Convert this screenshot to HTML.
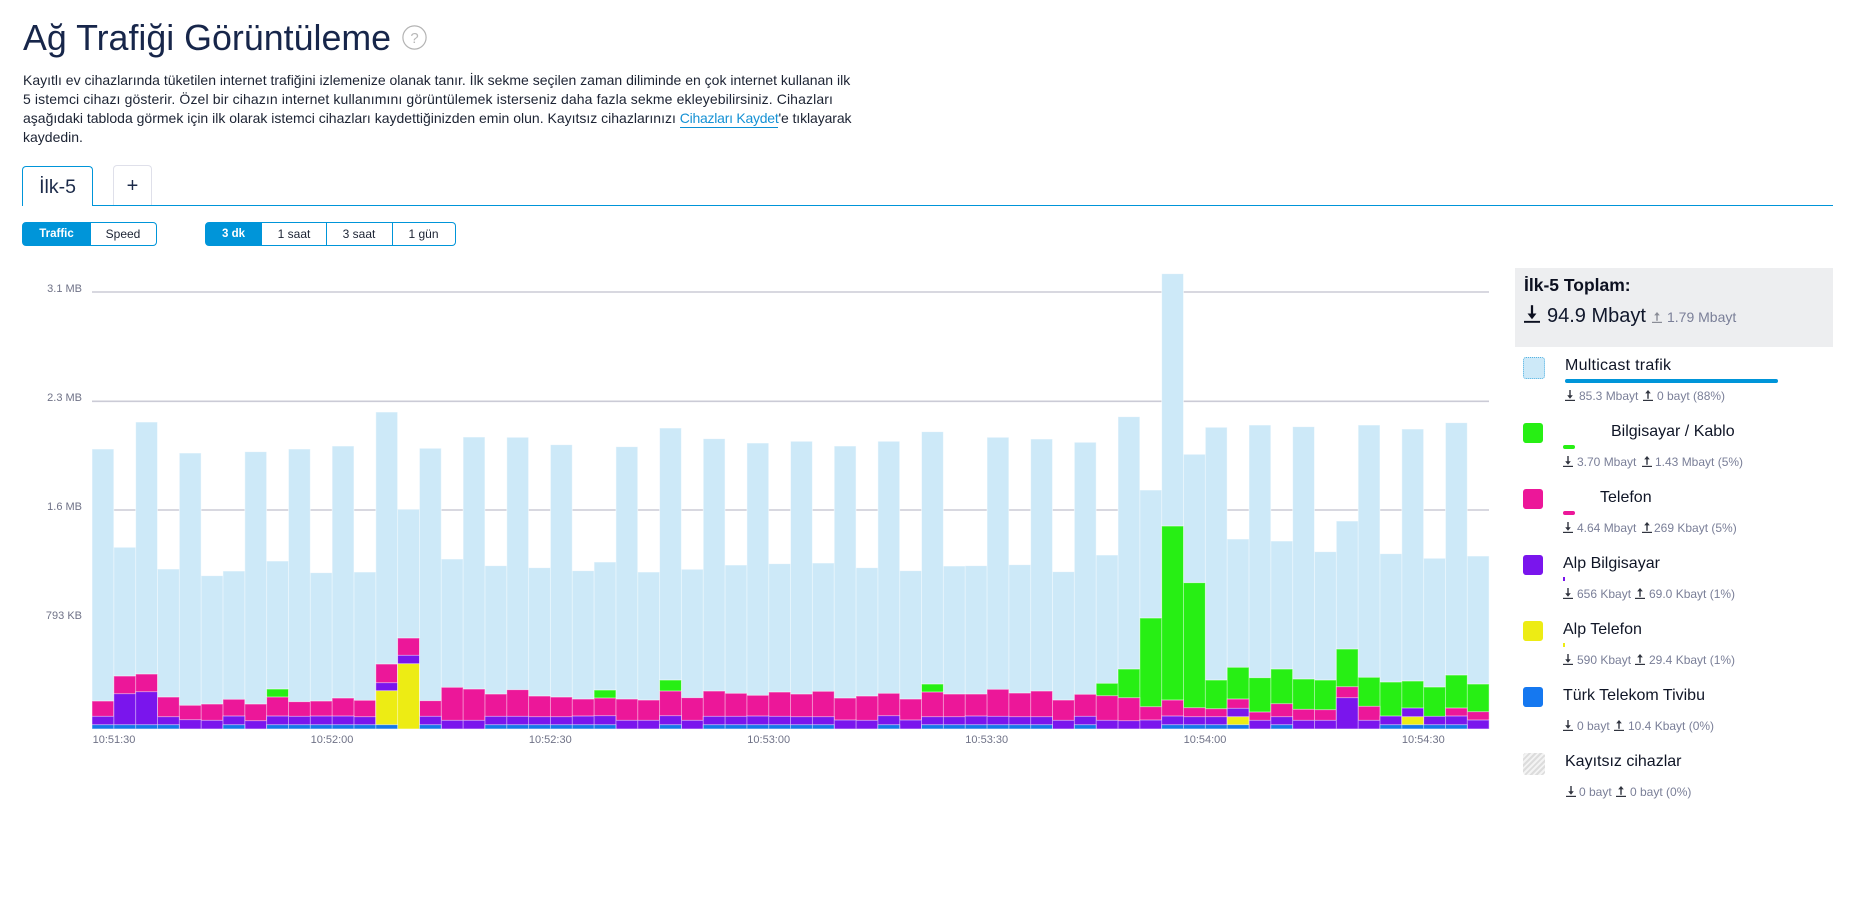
<!DOCTYPE html>
<html lang="tr"><head><meta charset="utf-8"><title>Ağ Trafiği Görüntüleme</title>
<style>
html,body{margin:0;padding:0;background:#fff}
#p{position:relative;width:1852px;height:905px;overflow:hidden;background:#fff;font-family:"Liberation Sans",sans-serif;color:#14213d}
.a{position:absolute;white-space:nowrap}
.l{position:absolute;left:23px;white-space:nowrap;font-size:14px;line-height:18px;color:#1c2333}
.n{position:absolute;font-size:16px;line-height:20px;color:#0f1526;white-space:nowrap}
.s{position:absolute;font-size:12px;line-height:16px;color:#7a7f98;white-space:nowrap}
.i{position:absolute;width:10px;height:11px}
.sw{position:absolute;left:1523px;width:20px;height:20px;border-radius:3px}
.b{position:absolute;top:222px;height:24px;box-sizing:border-box;border:1px solid #0095d9;font-size:12px;line-height:22px;text-align:center;color:#1c2333}
.on{background:#0095d9;color:#fff;font-weight:bold;font-size:11.5px}
</style></head><body><div id="p">
<svg width="0" height="0" style="position:absolute"><defs>
<symbol id="d" viewBox="0 0 10 11"><path d="M5 0V7" stroke="currentColor" stroke-width="1.4" fill="none"/><path d="M2.2 5.2H7.8L5 8.8Z" fill="currentColor"/><rect x="0" y="9.8" width="10" height="1.2" fill="currentColor"/></symbol>
<symbol id="u" viewBox="0 0 10 11"><path d="M5 8.8V2" stroke="currentColor" stroke-width="1.4" fill="none"/><path d="M2.2 3.4H7.8L5 0Z" fill="currentColor"/><rect x="0" y="9.8" width="10" height="1.2" fill="currentColor"/></symbol>
</defs></svg>

<div class="a" style="left:23px;top:16px;font-size:35.8px;line-height:44px;color:#17264a">Ağ Trafiği Görüntüleme</div>
<svg class="a" style="left:402px;top:25px" width="25" height="25" viewBox="0 0 25 25"><circle cx="12.5" cy="12.5" r="11.6" fill="none" stroke="#b4b4b4" stroke-width="1.2"/><text x="12.5" y="18" font-size="15" text-anchor="middle" fill="#b8b8b8" font-family="Liberation Sans, sans-serif">?</text></svg>

<div class="l" style="top:71px">Kayıtlı ev cihazlarında tüketilen internet trafiğini izlemenize olanak tanır. İlk sekme seçilen zaman diliminde en çok internet kullanan ilk</div>
<div class="l" style="top:90px;letter-spacing:.117px">5 istemci cihazı gösterir. Özel bir cihazın internet kullanımını görüntülemek isterseniz daha fazla sekme ekleyebilirsiniz. Cihazları</div>
<div class="l" style="top:109px">aşağıdaki tabloda görmek için ilk olarak istemci cihazları kaydettiğinizden emin olun. Kayıtsız cihazlarınızı <span style="color:#1591d4;border-bottom:1px solid #0a8fd4;padding-bottom:1px;letter-spacing:-.25px">Cihazları Kaydet</span><span style="letter-spacing:-.1px">'e tıklayarak</span></div>
<div class="l" style="top:128px">kaydedin.</div>

<div class="a" style="left:92px;top:205px;width:1741px;height:1px;background:#0095d9"></div>
<div class="a" style="left:22px;top:166px;width:71px;height:40px;box-sizing:border-box;border:1px solid #0095d9;border-bottom:0;border-radius:4px 4px 0 0;background:#fff;text-align:center;font-size:19.5px;line-height:40px;color:#1c2b4a">İlk-5</div>
<div class="a" style="left:113px;top:165px;width:39px;height:40px;box-sizing:border-box;border:1px solid #dfe0ea;border-bottom:0;border-radius:4px 4px 0 0;background:#fff;text-align:center;font-size:20px;line-height:40px;color:#1c2b4a">+</div>

<div class="b on" style="left:22px;width:69px;border-radius:4px 0 0 4px">Traffic</div>
<div class="b" style="left:90px;width:67px;border-left:0;border-radius:0 4px 4px 0">Speed</div>
<div class="b on" style="left:205px;width:57px;border-radius:4px 0 0 4px">3 dk</div>
<div class="b" style="left:261px;width:66px">1 saat</div>
<div class="b" style="left:326px;width:67px;border-left:0">3 saat</div>
<div class="b" style="left:392px;width:64px;border-left:0;border-radius:0 4px 4px 0">1 gün</div>

<svg class="a" style="left:0;top:0" width="1500" height="760" viewBox="0 0 1500 760">
<g stroke="#cbcbd6" stroke-width="1.6"><path d="M92 292H1489M92 401.3H1489M92 510H1489"/></g>
<path stroke="#d4d4e0" stroke-width="1" d="M92 729H1489"/>
<g font-family="Liberation Sans, sans-serif" font-size="11" fill="#6f7287">
<g text-anchor="end"><text x="82" y="292">3.1 MB</text><text x="82" y="401">2.3 MB</text><text x="82" y="510">1.6 MB</text><text x="82" y="619">793 KB</text></g>
<g text-anchor="middle"><text x="114" y="743">10:51:30</text><text x="332" y="743">10:52:00</text><text x="550.3" y="743">10:52:30</text><text x="768.7" y="743">10:53:00</text><text x="986.7" y="743">10:53:30</text><text x="1205" y="743">10:54:00</text><text x="1423.3" y="743">10:54:30</text></g>
</g>
<g stroke="#fff" stroke-opacity=".55" stroke-width=".9">
<path fill="#cde9f8" d="M92 449h21.83V729h-21.83zM113.83 547.3h21.83V729h-21.83zM135.66 422h21.83V729h-21.83zM157.49 569h21.83V729h-21.83zM179.32 453h21.83V729h-21.83zM201.15 575.7h21.83V729h-21.83zM222.98 571h21.83V729h-21.83zM244.81 451.7h21.83V729h-21.83zM266.64 561h21.83V729h-21.83zM288.47 449h21.83V729h-21.83zM310.3 572.7h21.83V729h-21.83zM332.13 446h21.83V729h-21.83zM353.96 572h21.83V729h-21.83zM375.79 412h21.83V729h-21.83zM397.62 509.3h21.83V729h-21.83zM419.45 448.3h21.83V729h-21.83zM441.28 559h21.83V729h-21.83zM463.11 437h21.83V729h-21.83zM484.94 565.7h21.83V729h-21.83zM506.77 437.3h21.83V729h-21.83zM528.6 567.7h21.83V729h-21.83zM550.43 444.7h21.83V729h-21.83zM572.26 570.7h21.83V729h-21.83zM594.09 562h21.83V729h-21.83zM615.92 446.7h21.83V729h-21.83zM637.75 572h21.83V729h-21.83zM659.58 428h21.83V729h-21.83zM681.41 569.3h21.83V729h-21.83zM703.24 438.7h21.83V729h-21.83zM725.07 565h21.83V729h-21.83zM746.9 443h21.83V729h-21.83zM768.73 563.7h21.83V729h-21.83zM790.56 441.3h21.83V729h-21.83zM812.39 563h21.83V729h-21.83zM834.22 446h21.83V729h-21.83zM856.05 567.7h21.83V729h-21.83zM877.88 441.3h21.83V729h-21.83zM899.71 570.7h21.83V729h-21.83zM921.54 431.7h21.83V729h-21.83zM943.37 566h21.83V729h-21.83zM965.2 565.7h21.83V729h-21.83zM987.03 437.3h21.83V729h-21.83zM1008.86 564.7h21.83V729h-21.83zM1030.69 439h21.83V729h-21.83zM1052.52 571.7h21.83V729h-21.83zM1074.35 442.3h21.83V729h-21.83zM1096.18 555h21.83V729h-21.83zM1118.01 416.7h21.83V729h-21.83zM1139.84 490h21.83V729h-21.83zM1161.67 273.7h21.83V729h-21.83zM1183.5 454.3h21.83V729h-21.83zM1205.33 427.3h21.83V729h-21.83zM1227.16 539h21.83V729h-21.83zM1248.99 425h21.83V729h-21.83zM1270.82 541h21.83V729h-21.83zM1292.65 426.7h21.83V729h-21.83zM1314.48 551.7h21.83V729h-21.83zM1336.31 521h21.83V729h-21.83zM1358.14 425h21.83V729h-21.83zM1379.97 553.7h21.83V729h-21.83zM1401.8 429h21.83V729h-21.83zM1423.63 558.3h21.83V729h-21.83zM1445.46 422.7h21.83V729h-21.83zM1467.29 556h21.83V729h-21.83z"/>
<path fill="#27ef14" d="M266.64 689h21.83V729h-21.83zM594.09 690h21.83V729h-21.83zM659.58 680h21.83V729h-21.83zM921.54 684h21.83V729h-21.83zM1096.18 683.3h21.83V729h-21.83zM1118.01 669h21.83V729h-21.83zM1139.84 618h21.83V729h-21.83zM1161.67 526h21.83V729h-21.83zM1183.5 582.7h21.83V729h-21.83zM1205.33 680h21.83V729h-21.83zM1227.16 667.3h21.83V729h-21.83zM1248.99 677.7h21.83V729h-21.83zM1270.82 669h21.83V729h-21.83zM1292.65 679h21.83V729h-21.83zM1314.48 680h21.83V729h-21.83zM1336.31 649h21.83V729h-21.83zM1358.14 677.3h21.83V729h-21.83zM1379.97 682h21.83V729h-21.83zM1401.8 681h21.83V729h-21.83zM1423.63 687h21.83V729h-21.83zM1445.46 675h21.83V729h-21.83zM1467.29 684h21.83V729h-21.83z"/>
<path fill="#ec1799" d="M92 701h21.83V729h-21.83zM113.83 676h21.83V729h-21.83zM135.66 674h21.83V729h-21.83zM157.49 697h21.83V729h-21.83zM179.32 705.3h21.83V729h-21.83zM201.15 704h21.83V729h-21.83zM222.98 699.3h21.83V729h-21.83zM244.81 704h21.83V729h-21.83zM266.64 697h21.83V729h-21.83zM288.47 701.7h21.83V729h-21.83zM310.3 701h21.83V729h-21.83zM332.13 698h21.83V729h-21.83zM353.96 700.3h21.83V729h-21.83zM375.79 664h21.83V729h-21.83zM397.62 638h21.83V729h-21.83zM419.45 700.7h21.83V729h-21.83zM441.28 687.3h21.83V729h-21.83zM463.11 689h21.83V729h-21.83zM484.94 694h21.83V729h-21.83zM506.77 689.7h21.83V729h-21.83zM528.6 696h21.83V729h-21.83zM550.43 697h21.83V729h-21.83zM572.26 699h21.83V729h-21.83zM594.09 698h21.83V729h-21.83zM615.92 699h21.83V729h-21.83zM637.75 700h21.83V729h-21.83zM659.58 691h21.83V729h-21.83zM681.41 697.7h21.83V729h-21.83zM703.24 691h21.83V729h-21.83zM725.07 693.3h21.83V729h-21.83zM746.9 695.3h21.83V729h-21.83zM768.73 692h21.83V729h-21.83zM790.56 694h21.83V729h-21.83zM812.39 691.3h21.83V729h-21.83zM834.22 698h21.83V729h-21.83zM856.05 696h21.83V729h-21.83zM877.88 693.3h21.83V729h-21.83zM899.71 699h21.83V729h-21.83zM921.54 692h21.83V729h-21.83zM943.37 694h21.83V729h-21.83zM965.2 694h21.83V729h-21.83zM987.03 689.3h21.83V729h-21.83zM1008.86 693h21.83V729h-21.83zM1030.69 691h21.83V729h-21.83zM1052.52 700h21.83V729h-21.83zM1074.35 694.3h21.83V729h-21.83zM1096.18 695.7h21.83V729h-21.83zM1118.01 697.7h21.83V729h-21.83zM1139.84 706.7h21.83V729h-21.83zM1161.67 700h21.83V729h-21.83zM1183.5 707.7h21.83V729h-21.83zM1205.33 708.7h21.83V729h-21.83zM1227.16 699h21.83V729h-21.83zM1248.99 712h21.83V729h-21.83zM1270.82 703.7h21.83V729h-21.83zM1292.65 709.3h21.83V729h-21.83zM1314.48 709.7h21.83V729h-21.83zM1336.31 686.7h21.83V729h-21.83zM1358.14 706.3h21.83V729h-21.83zM1445.46 708h21.83V729h-21.83zM1467.29 711.7h21.83V729h-21.83z"/>
<path fill="#7a15ed" d="M92 716.3h21.83V729h-21.83zM113.83 693.7h21.83V729h-21.83zM135.66 691.7h21.83V729h-21.83zM157.49 716.7h21.83V729h-21.83zM179.32 719.7h21.83V729h-21.83zM201.15 720.3h21.83V729h-21.83zM222.98 716h21.83V729h-21.83zM244.81 720.7h21.83V729h-21.83zM266.64 716h21.83V729h-21.83zM288.47 716.3h21.83V729h-21.83zM310.3 716h21.83V729h-21.83zM332.13 716h21.83V729h-21.83zM353.96 716.7h21.83V729h-21.83zM375.79 682.7h21.83V729h-21.83zM397.62 655.3h21.83V729h-21.83zM419.45 716.3h21.83V729h-21.83zM441.28 720.3h21.83V729h-21.83zM463.11 720.3h21.83V729h-21.83zM484.94 716.3h21.83V729h-21.83zM506.77 716.3h21.83V729h-21.83zM528.6 716.7h21.83V729h-21.83zM550.43 716.7h21.83V729h-21.83zM572.26 716h21.83V729h-21.83zM594.09 715.7h21.83V729h-21.83zM615.92 720.3h21.83V729h-21.83zM637.75 720.3h21.83V729h-21.83zM659.58 715.7h21.83V729h-21.83zM681.41 720.3h21.83V729h-21.83zM703.24 716.3h21.83V729h-21.83zM725.07 716.3h21.83V729h-21.83zM746.9 716h21.83V729h-21.83zM768.73 716.3h21.83V729h-21.83zM790.56 716.7h21.83V729h-21.83zM812.39 716.7h21.83V729h-21.83zM834.22 720h21.83V729h-21.83zM856.05 720.3h21.83V729h-21.83zM877.88 715.7h21.83V729h-21.83zM899.71 720h21.83V729h-21.83zM921.54 716.7h21.83V729h-21.83zM943.37 716.7h21.83V729h-21.83zM965.2 716h21.83V729h-21.83zM987.03 716.3h21.83V729h-21.83zM1008.86 716.7h21.83V729h-21.83zM1030.69 716.7h21.83V729h-21.83zM1052.52 720.3h21.83V729h-21.83zM1074.35 716.3h21.83V729h-21.83zM1096.18 720.3h21.83V729h-21.83zM1118.01 720.7h21.83V729h-21.83zM1139.84 720h21.83V729h-21.83zM1161.67 716h21.83V729h-21.83zM1183.5 716.7h21.83V729h-21.83zM1205.33 716.7h21.83V729h-21.83zM1227.16 708.3h21.83V729h-21.83zM1248.99 720.3h21.83V729h-21.83zM1270.82 716.7h21.83V729h-21.83zM1292.65 720.3h21.83V729h-21.83zM1314.48 720.3h21.83V729h-21.83zM1336.31 697.7h21.83V729h-21.83zM1358.14 720.3h21.83V729h-21.83zM1379.97 716h21.83V729h-21.83zM1401.8 708h21.83V729h-21.83zM1423.63 716.3h21.83V729h-21.83zM1445.46 716h21.83V729h-21.83zM1467.29 720h21.83V729h-21.83z"/>
<path fill="#edec14" d="M375.79 690.7h21.83V729h-21.83zM397.62 663.7h21.83V729h-21.83zM1227.16 716.7h21.83V729h-21.83zM1401.8 716.7h21.83V729h-21.83z"/>
<path fill="#1578e8" d="M92 724.7h21.83V729h-21.83zM113.83 724.7h21.83V729h-21.83zM135.66 724.7h21.83V729h-21.83zM157.49 724.7h21.83V729h-21.83zM222.98 724.7h21.83V729h-21.83zM266.64 724.7h21.83V729h-21.83zM288.47 724.7h21.83V729h-21.83zM310.3 724.7h21.83V729h-21.83zM332.13 724.7h21.83V729h-21.83zM353.96 724.7h21.83V729h-21.83zM375.79 724.7h21.83V729h-21.83zM419.45 724.7h21.83V729h-21.83zM484.94 724.7h21.83V729h-21.83zM506.77 724.7h21.83V729h-21.83zM528.6 724.7h21.83V729h-21.83zM550.43 724.7h21.83V729h-21.83zM572.26 724.7h21.83V729h-21.83zM594.09 724.7h21.83V729h-21.83zM659.58 724.7h21.83V729h-21.83zM703.24 724.7h21.83V729h-21.83zM725.07 724.7h21.83V729h-21.83zM746.9 724.7h21.83V729h-21.83zM768.73 724.7h21.83V729h-21.83zM790.56 724.7h21.83V729h-21.83zM812.39 724.7h21.83V729h-21.83zM877.88 724.7h21.83V729h-21.83zM921.54 724.7h21.83V729h-21.83zM943.37 724.7h21.83V729h-21.83zM965.2 724.7h21.83V729h-21.83zM987.03 724.7h21.83V729h-21.83zM1008.86 724.7h21.83V729h-21.83zM1030.69 724.7h21.83V729h-21.83zM1074.35 724.7h21.83V729h-21.83zM1161.67 724.7h21.83V729h-21.83zM1183.5 724.7h21.83V729h-21.83zM1205.33 724.7h21.83V729h-21.83zM1227.16 724.7h21.83V729h-21.83zM1270.82 724.7h21.83V729h-21.83zM1379.97 724.7h21.83V729h-21.83zM1401.8 724.7h21.83V729h-21.83zM1423.63 724.7h21.83V729h-21.83zM1445.46 724.7h21.83V729h-21.83z"/>
</g>
</svg>

<div class="a" style="left:1515px;top:268px;width:318px;height:79px;background:#edeef0"></div>
<div class="a" style="left:1524px;top:274px;font-size:17.5px;line-height:22px;font-weight:bold;color:#0c1020">İlk-5 Toplam:</div>
<svg class="a" style="left:1524px;top:305px;color:#0c1020" width="16" height="18"><use href="#d"/></svg>
<div class="a" style="left:1547px;top:304px;font-size:20px;line-height:24px;color:#10172b">94.9 Mbayt</div>
<svg class="a" style="left:1652px;top:312px;color:#8a8d97" width="10" height="11"><use href="#u"/></svg>
<div class="a" style="left:1667px;top:308px;font-size:14px;line-height:18px;color:#7a7f98">1.79 Mbayt</div>

<div class="sw" style="top:357px;width:20px;height:20px;background:#cde9f8;border:1px dotted #55b3e2"></div>
<div class="n" style="left:1565px;top:356px;letter-spacing:.25px">Multicast trafik</div>
<div class="a" style="left:1565px;top:379px;width:213px;height:4px;border-radius:2px;background:#0095d9"></div>
<svg class="i" style="left:1565px;top:390px;color:#30343f"><use href="#d"/></svg>
<div class="s" style="left:1579px;top:388px">85.3 Mbayt</div>
<svg class="i" style="left:1643px;top:390px;color:#30343f"><use href="#u"/></svg>
<div class="s" style="left:1657px;top:388px">0 bayt (88%)</div>

<div class="sw" style="top:423px;background:#27ef14"></div>
<div class="n" style="left:1611px;top:422px">Bilgisayar / Kablo</div>
<div class="a" style="left:1563px;top:445px;width:12px;height:4px;border-radius:2px;background:#27ef14"></div>
<svg class="i" style="left:1563px;top:456px;color:#30343f"><use href="#d"/></svg>
<div class="s" style="left:1577px;top:454px">3.70 Mbayt</div>
<svg class="i" style="left:1642px;top:456px;color:#30343f"><use href="#u"/></svg>
<div class="s" style="left:1655px;top:454px">1.43 Mbayt (5%)</div>

<div class="sw" style="top:489px;background:#ec1799"></div>
<div class="n" style="left:1600px;top:488px">Telefon</div>
<div class="a" style="left:1563px;top:511px;width:12px;height:4px;border-radius:2px;background:#ec1799"></div>
<svg class="i" style="left:1563px;top:522px;color:#30343f"><use href="#d"/></svg>
<div class="s" style="left:1577px;top:520px">4.64 Mbayt</div>
<svg class="i" style="left:1642px;top:522px;color:#30343f"><use href="#u"/></svg>
<div class="s" style="left:1654px;top:520px">269 Kbayt (5%)</div>

<div class="sw" style="top:555px;background:#7a15ed"></div>
<div class="n" style="left:1563px;top:554px">Alp Bilgisayar</div>
<div class="a" style="left:1563px;top:577px;width:2px;height:4px;background:#7a15ed"></div>
<svg class="i" style="left:1563px;top:588px;color:#30343f"><use href="#d"/></svg>
<div class="s" style="left:1577px;top:586px">656 Kbayt</div>
<svg class="i" style="left:1635px;top:588px;color:#30343f"><use href="#u"/></svg>
<div class="s" style="left:1649px;top:586px">69.0 Kbayt (1%)</div>

<div class="sw" style="top:621px;background:#edec14"></div>
<div class="n" style="left:1563px;top:620px">Alp Telefon</div>
<div class="a" style="left:1563px;top:643px;width:2px;height:4px;background:#edec14"></div>
<svg class="i" style="left:1563px;top:654px;color:#30343f"><use href="#d"/></svg>
<div class="s" style="left:1577px;top:652px">590 Kbayt</div>
<svg class="i" style="left:1635px;top:654px;color:#30343f"><use href="#u"/></svg>
<div class="s" style="left:1649px;top:652px">29.4 Kbayt (1%)</div>

<div class="sw" style="top:687px;background:#1578f0"></div>
<div class="n" style="left:1563px;top:686px">Türk Telekom Tivibu</div>
<svg class="i" style="left:1563px;top:720px;color:#30343f"><use href="#d"/></svg>
<div class="s" style="left:1577px;top:718px">0 bayt</div>
<svg class="i" style="left:1614px;top:720px;color:#30343f"><use href="#u"/></svg>
<div class="s" style="left:1628px;top:718px">10.4 Kbayt (0%)</div>

<div class="sw" style="top:753px;width:22px;height:22px;background:repeating-linear-gradient(135deg,#dcdcdc 0 2px,#f3f3f3 2px 4px)"></div>
<div class="n" style="left:1565px;top:752px">Kayıtsız cihazlar</div>
<svg class="i" style="left:1566px;top:786px;color:#30343f"><use href="#d"/></svg>
<div class="s" style="left:1579px;top:784px">0 bayt</div>
<svg class="i" style="left:1616px;top:786px;color:#30343f"><use href="#u"/></svg>
<div class="s" style="left:1630px;top:784px">0 bayt (0%)</div>
</div></body></html>
